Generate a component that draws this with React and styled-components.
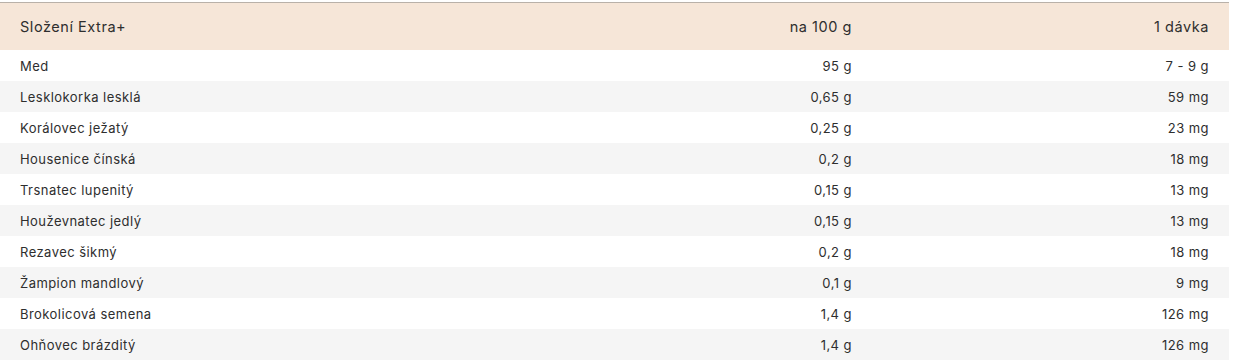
import styled, { createGlobalStyle } from "styled-components";

const Global = createGlobalStyle`
  body {
    margin: 0;
    background: #ffffff;
    font-family: "Inter", "Noto Sans", sans-serif;
  }
`

const Wrapper = styled.div`
  width: 1229px;
  padding-top: 2px;
`

const Table = styled.div`
  border-top: 1px solid #b9b1a9;
  display: flex;
  flex-direction: column;
`

const Row = styled.div`
  display: grid;
  grid-template-columns: 1fr 357px 357px;
  align-items: center;
  height: ${(p) => (p.$head ? "47px" : "31px")};
  background: ${(p) => (p.$head ? "#f6e6d8" : p.$odd ? "#f5f5f5" : "#ffffff")};
  color: #2e2e2e;
  font-size: ${(p) => (p.$head ? "14.5px" : "13px")};
  letter-spacing: ${(p) => (p.$head ? "0.55px" : "0.45px")};
`

const Cell = styled.div`
  padding: 0 20px;
  text-align: ${(p) => (p.$right ? "right" : "left")};
  white-space: nowrap;
`

const rows = [
  ["Med", "95 g", "7 - 9 g"],
  ["Lesklokorka lesklá", "0,65 g", "59 mg"],
  ["Korálovec ježatý", "0,25 g", "23 mg"],
  ["Housenice čínská", "0,2 g", "18 mg"],
  ["Trsnatec lupenitý", "0,15 g", "13 mg"],
  ["Houževnatec jedlý", "0,15 g", "13 mg"],
  ["Rezavec šikmý", "0,2 g", "18 mg"],
  ["Žampion mandlový", "0,1 g", "9 mg"],
  ["Brokolicová semena", "1,4 g", "126 mg"],
  ["Ohňovec brázditý", "1,4 g", "126 mg"],
];

export default function App() {
  return (
    <>
      <Global />
      <Wrapper>
        <Table>
          <Row $head>
            <Cell>Složení Extra+</Cell>
            <Cell $right>na 100 g</Cell>
            <Cell $right>1 dávka</Cell>
          </Row>
          {rows.map((r, idx) => (
            <Row key={idx} $odd={idx % 2 === 1}>
              <Cell>{r[0]}</Cell>
              <Cell $right>{r[1]}</Cell>
              <Cell $right>{r[2]}</Cell>
            </Row>
          ))}
        </Table>
      </Wrapper>
    </>
  );
}
